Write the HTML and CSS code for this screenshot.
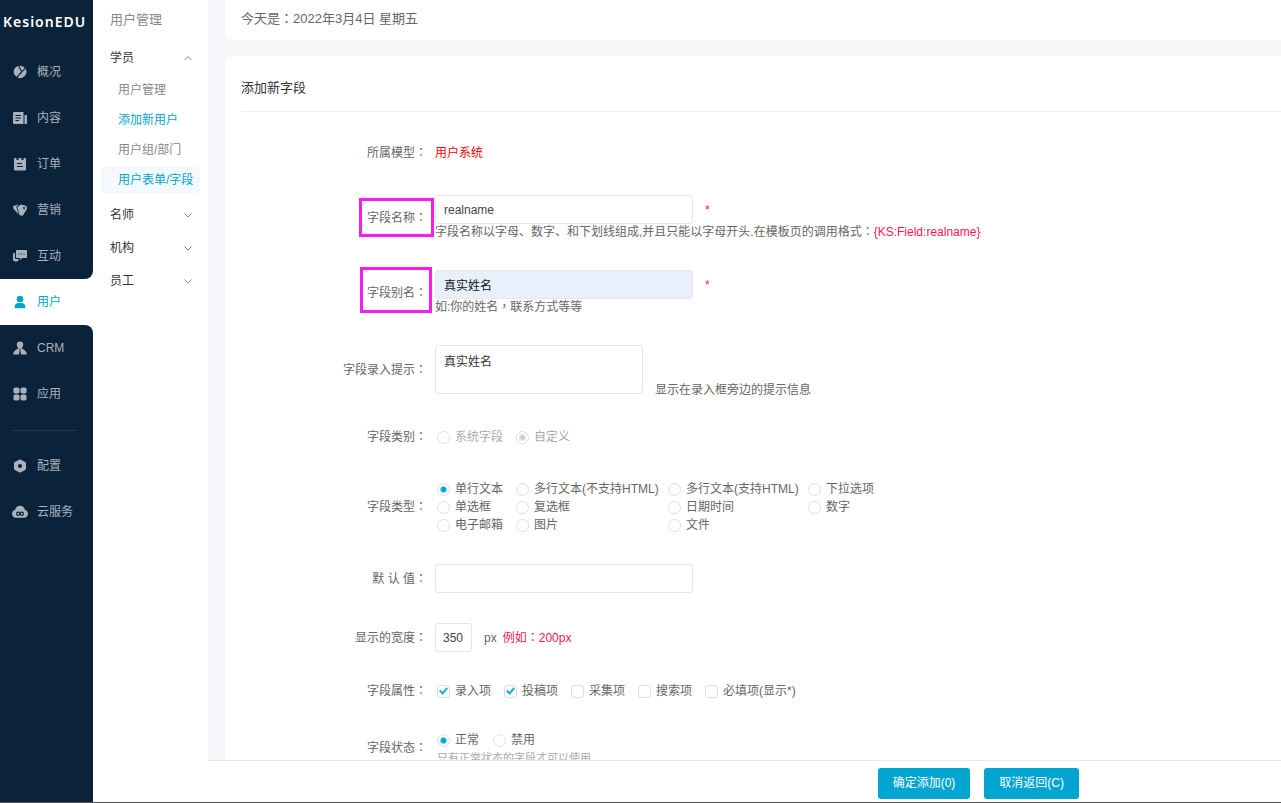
FILE: index.html
```html
<!DOCTYPE html>
<html lang="zh-CN">
<head>
  <meta charset="UTF-8" />
  <title>添加新字段</title>
  <link rel="stylesheet" href="styles.css">
</head>
<body>
  <nav class="sidebar">
    <div class="nav-block nav-top">
      <div class="logo">KesionEDU</div>
      <a class="nav-item" href="#">
        <svg viewBox="0 0 14 14"><path d="M5.200 1 8 6.800 3.600 11.800A5.900 5.900 0 0 1 5.200 1z"/><path d="M6.400.8A6.300 6.300 0 0 1 11.800 3L8.800 6z"/><path d="M12.600 3.800A6.300 6.300 0 0 1 4.600 12.600L9 7.400z"/></svg>
        概况
      </a>
      <a class="nav-item" href="#">
        <svg viewBox="0 0 14 14"><path fill-rule="evenodd" d="M1 1h9.500v12H1a1 1 0 0 1-1-1V2a1 1 0 0 1 1-1zm1.500 3v1h5.500V4zm0 2.500v1h5.500v-1zm0 2.500v1H6V9z"/><path d="M11.500 4H13a1 1 0 0 1 1 1v7a1 1 0 0 1-1 1h-1.500z"/></svg>
        内容
      </a>
      <a class="nav-item" href="#">
        <svg viewBox="0 0 14 14"><path fill-rule="evenodd" d="M2 1h1.500v2h2V1h3v2h2V1H12a1 1 0 0 1 1 1v10.500a1 1 0 0 1-1 1H2a1 1 0 0 1-1-1V2a1 1 0 0 1 1-1zm2 5v1h5V6zm0 3v1h6V9z"/></svg>
        订单
      </a>
      <a class="nav-item" href="#">
        <svg viewBox="0 0 14 14"><path fill-rule="evenodd" d="M4.200 4 8 1.500l5.500 1.500.5 3-4.500 7L6.500 12zM11 4a1 1 0 1 0 .1 0z"/><path d="M6 1.200 3.300 3.600l2.200 8L.3 5.500 0 3z"/></svg>
        营销
      </a>
      <a class="nav-item" href="#">
        <svg viewBox="0 0 14 14"><path fill-rule="evenodd" d="M4 1h9a1 1 0 0 1 1 1v6a1 1 0 0 1-1 1H9l-2 2V9H4a1 1 0 0 1-1-1V2a1 1 0 0 1 1-1zm1.500 3.500v1h1v-1zm2.500 0v1h1v-1zm2.500 0v1h1v-1z"/><path d="M2 4v5a1 1 0 0 0 1 1h2.500v2H4l-1.500 1.500V12H1a1 1 0 0 1-1-1V5a1 1 0 0 1 1-1z"/></svg>
        互动
      </a>
    </div>
    <a class="nav-item active" href="#">
      <svg viewBox="0 0 14 14"><circle cx="7" cy="4" r="3.300"/><path d="M5 8h4c2.500.5 3.500 2 3.500 4.500q0 .7-1 .7h-9q-1 0-1-.7C1.500 10 2.500 8.500 5 8z"/></svg>
      用户
    </a>
    <div class="nav-block nav-bottom">
      <a class="nav-item" href="#">
        <svg viewBox="0 0 14 14"><path d="M7 .5a3.200 3.200 0 0 1 3.200 3.300c0 1.400-.7 2.400-1.400 3.200L7.500 8h-1L5.200 7c-.7-.8-1.400-1.800-1.400-3.200A3.200 3.200 0 0 1 7 .5z"/><path d="M5.600 7 6.700 9 6 13.500H1q-1 0-.8-1C.8 10 3 8.500 5.600 7zM8.400 7c2.600 1.500 4.800 3 5.400 5.500q.2 1-.8 1H8L7.300 9z"/></svg>
        CRM
      </a>
      <a class="nav-item" href="#">
        <svg viewBox="0 0 14 14"><rect x=".5" y=".5" width="6" height="6" rx="1.800"/><rect x="7.500" y=".5" width="6" height="6" rx="1.800"/><rect x=".5" y="7.500" width="6" height="6" rx="1.800"/><rect x="7.500" y="7.500" width="6" height="6" rx="1.800"/></svg>
        应用
      </a>
      <hr class="nav-line">
      <a class="nav-item" href="#">
        <svg viewBox="0 0 14 14"><path fill-rule="evenodd" d="M7 .4q.6 0 1 .3l4.200 2.300q.8.500.8 1.400v5.200q0 .9-.8 1.400L8 13.300q-1 .6-2 0L1.800 11Q1 10.500 1 9.600V4.400q0-.9.8-1.400L6 .7q.4-.3 1-.3zM7 5a2 2 0 1 0 .1 0z"/></svg>
        配置
      </a>
      <a class="nav-item" href="#">
        <svg class="wide" viewBox="0 0 14 14"><path fill-rule="evenodd" d="M7 1.500c2.300 0 4 1.500 4.300 3.700 1.700.4 2.700 1.700 2.700 3.300 0 2-1.500 3.500-3.500 3.500h-7C1.500 12 0 10.500 0 8.500c0-1.600 1-2.900 2.700-3.300C3 3 4.700 1.500 7 1.500zM5.400 6.600a1.900 1.900 0 1 0 0 3.800c.7 0 1.200-.3 1.600-.7.4.4.9.7 1.600.7a1.900 1.900 0 1 0 0-3.800c-.7 0-1.200.3-1.600.7-.4-.4-.9-.7-1.600-.7zM5.400 7.600a.9.9 0 1 1 0 1.800.9.9 0 0 1 0-1.800zM8.600 7.600a.9.9 0 1 1 0 1.800.9.9 0 0 1 0-1.800z"/></svg>
        云服务
      </a>
    </div>
  </nav>

  <aside class="submenu">
    <div class="submenu-title">用户管理</div>
    <a class="group" href="#">学员 <svg viewBox="0 0 8 8"><path d="M0.500 6 4 2.500 7.500 6"/></svg></a>
    <ul>
      <li><a href="#">用户管理</a></li>
      <li><a class="blue" href="#">添加新用户</a></li>
      <li><a href="#">用户组/部门</a></li>
      <li><a class="blue current" href="#">用户表单/字段</a></li>
    </ul>
    <a class="group" href="#">名师 <svg viewBox="0 0 8 8"><path d="M0.500 2.500 4 6 7.500 2.500"/></svg></a>
    <a class="group" href="#">机构 <svg class="brown" viewBox="0 0 8 8"><path d="M0.500 2.500 4 6 7.500 2.500"/></svg></a>
    <a class="group" href="#">员工 <svg viewBox="0 0 8 8"><path d="M0.500 2.500 4 6 7.500 2.500"/></svg></a>
  </aside>

  <div class="main">
    <div class="content">
      <div class="card today">今天是<span class="mid" lang="zh-TW">：</span>2022年3月4日 星期五</div>

      <form class="card" id="fieldForm">
        <h2>添加新字段</h2>

        <div class="row">
          <div class="label">所属模型<span class="mid" lang="zh-TW">：</span></div>
          <div class="field red one-line">用户系统</div>
        </div>

        <div class="row">
          <label class="label mark" for="fieldName">字段名称<span class="mid" lang="zh-TW">：</span></label>
          <div class="field">
            <div class="line"><input class="text" type="text" id="fieldName" value="realname"><span class="star">*</span></div>
            <div class="hint">字段名称以字母、数字、和下划线组成,并且只能以字母开头.在模板页的调用格式<span class="mid" lang="zh-TW">：</span><span class="pink">{KS:Field:realname}</span></div>
          </div>
        </div>

        <div class="row">
          <label class="label mark mark-tall" for="fieldAlias">字段别名<span class="mid" lang="zh-TW">：</span></label>
          <div class="field">
            <div class="line"><input class="text filled" type="text" id="fieldAlias" value="真实姓名"><span class="star">*</span></div>
            <div class="hint">如:你的姓名<span class="mid" lang="zh-TW">，</span>联系方式等等</div>
          </div>
        </div>

        <div class="row">
          <label class="label" for="fieldTips">字段录入提示<span class="mid" lang="zh-TW">：</span></label>
          <div class="field line line-end">
            <textarea id="fieldTips">真实姓名</textarea>
            <span class="tips">显示在录入框旁边的提示信息</span>
          </div>
        </div>

        <div class="row">
          <div class="label">字段类别<span class="mid" lang="zh-TW">：</span></div>
          <div class="field options tall">
            <label class="disabled"><input type="radio" name="kind" disabled>系统字段</label>
            <label class="disabled"><input type="radio" name="kind" checked disabled>自定义</label>
          </div>
        </div>

        <div class="row">
          <div class="label">字段类型<span class="mid" lang="zh-TW">：</span></div>
          <div class="field types">
            <label><input type="radio" name="type" checked>单行文本</label>
            <label><input type="radio" name="type">多行文本(不支持HTML)</label>
            <label><input type="radio" name="type">多行文本(支持HTML)</label>
            <label><input type="radio" name="type">下拉选项</label>
            <label><input type="radio" name="type">单选框</label>
            <label><input type="radio" name="type">复选框</label>
            <label><input type="radio" name="type">日期时间</label>
            <label><input type="radio" name="type">数字</label>
            <label><input type="radio" name="type">电子邮箱</label>
            <label><input type="radio" name="type">图片</label>
            <label><input type="radio" name="type">文件</label>
          </div>
        </div>

        <div class="row">
          <label class="label" for="defaultValue">默 认 值<span class="mid" lang="zh-TW">：</span></label>
          <div class="field line"><input class="text" type="text" id="defaultValue"></div>
        </div>

        <div class="row">
          <label class="label" for="showWidth">显示的宽度<span class="mid" lang="zh-TW">：</span></label>
          <div class="field line">
            <input class="text short" type="text" id="showWidth" value="350">
            <span class="unit">px</span>
            <span class="pink">例如<span class="mid" lang="zh-TW">：</span>200px</span>
          </div>
        </div>

        <div class="row">
          <div class="label">字段属性<span class="mid" lang="zh-TW">：</span></div>
          <div class="field options">
            <label><input type="checkbox" checked>录入项</label>
            <label><input type="checkbox" checked>投稿项</label>
            <label><input type="checkbox">采集项</label>
            <label><input type="checkbox">搜索项</label>
            <label><input type="checkbox">必填项(显示*)</label>
          </div>
        </div>

        <div class="row">
          <div class="label">字段状态<span class="mid" lang="zh-TW">：</span></div>
          <div class="field">
            <div class="options status">
              <label><input type="radio" name="status" checked>正常</label>
              <label><input type="radio" name="status">禁用</label>
            </div>
            <div class="note">只有正常状态的字段才可以使用</div>
          </div>
        </div>
      </form>
    </div>

    <div class="footer">
      <button type="submit" form="fieldForm">确定添加(0)</button>
      <button type="button">取消返回(C)</button>
    </div>
  </div>
</body>
</html>
```

FILE: styles.css
```css
*, *::before, *::after {
  box-sizing: border-box;
}

body {
  margin: 0;
  height: 100vh;
  display: flex;
  overflow: hidden;
  border-bottom: 1px solid #555;
  background: #f4f6fa;
  color: #666;
  font-family: "Liberation Sans", "Noto Sans CJK SC", sans-serif;
  font-size: 12px;
  line-height: 16px;
}

a {
  color: inherit;
  text-decoration: none;
}

input, textarea, button {
  font: inherit;
  margin: 0;
}

/* full-width marks centred in their cell */
.mid {
  font-family: "Noto Sans CJK TC", sans-serif;
  line-height: 1;
}

/* left navigation */
.sidebar {
  width: 93px;
  flex: none;
  display: flex;
  flex-direction: column;
  background: #fff;
}

.nav-block {
  background: #0b233a;
}

.nav-top {
  border-bottom-right-radius: 8px;
}

.nav-bottom {
  flex: 1;
  border-top-right-radius: 8px;
}

.logo {
  height: 49px;
  padding: 0 0 5px 3px;
  display: flex;
  align-items: center;
  color: #fff;
  font-family: "Noto Sans", sans-serif;
  font-size: 14px;
  font-weight: 600;
  letter-spacing: 1px;
}

.nav-item {
  height: 46px;
  padding-left: 13px;
  display: flex;
  align-items: center;
  gap: 10px;
  color: #a9b1ba;
}

.nav-item svg {
  width: 14px;
  height: 14px;
  fill: currentColor;
}

.nav-item svg.wide {
  width: 16px;
  height: 16px;
  margin: 0 -1px;
}

.nav-item.active {
  color: #02a5cf;
}

.nav-line {
  margin: 13px 16px 12px 12px;
  border: none;
  border-top: 1px solid #23394e;
}

/* second level menu */
.submenu {
  width: 115px;
  flex: none;
  background: #fff;
}

.submenu-title {
  height: 41px;
  padding-left: 17px;
  line-height: 40px;
  font-size: 13px;
  color: #888;
}

.group {
  height: 33px;
  padding: 0 16px 0 17px;
  display: flex;
  align-items: center;
  justify-content: space-between;
  color: #333;
}

.group svg {
  width: 8px;
  height: 8px;
  fill: none;
  stroke: #888;
}

.group svg.brown {
  stroke: #a5704f;
}

.submenu ul {
  list-style: none;
  margin: 1px 0 3px;
  padding: 0;
}

.submenu li {
  padding: 2px 8px;
}

.submenu li a {
  display: block;
  padding-left: 17px;
  line-height: 26px;
  border-radius: 4px;
  color: #888;
  white-space: nowrap;
}

.submenu li a.blue {
  color: #02a5cf;
}

.submenu li a.current {
  background: #f3f9fd;
}

/* page */
.main {
  flex: 1;
  min-width: 0;
  display: flex;
  flex-direction: column;
}

.content {
  flex: 1;
  min-height: 0;
  overflow: hidden;
  padding-left: 17px;
}

.card {
  padding: 0 0 20px 16px;
  background: #fff;
  border-radius: 8px 0 0 8px;
}

.today {
  height: 40px;
  padding-bottom: 0;
  margin-bottom: 16px;
  border-top-left-radius: 0;
  line-height: 38px;
  font-size: 13px;
}

h2 {
  margin: 0 0 14px;
  height: 56px;
  padding-top: 8px;
  border-bottom: 1px solid #eee;
  line-height: 48px;
  font-size: 13px;
  font-weight: normal;
  color: #333;
}

.row {
  display: flex;
  align-items: center;
  gap: 8px;
  padding: 15px 0;
}

.label {
  position: relative;
  width: 186px;
  flex: none;
  text-align: right;
}

.mark::after {
  content: "";
  position: absolute;
  top: -12px;
  right: -7px;
  width: 75px;
  height: 39px;
  border: 3px solid #f81cf0;
}

.mark-tall::after {
  top: -18px;
  right: -5px;
  width: 72px;
  height: 46px;
}

.field {
  min-width: 0;
}

.one-line {
  line-height: 24px;
}

.line {
  display: flex;
  align-items: center;
}

.line-end {
  align-items: flex-end;
}

.text {
  width: 258px;
  height: 29px;
  padding: 0 8px;
  border: 1px solid #e6e6e6;
  border-radius: 3px;
  background: #fff;
  color: #444;
}

.text.short {
  width: 37px;
  padding: 0 7px;
}

.text.filled {
  background: #e8f0fe;
  color: #111;
}

textarea {
  display: block;
  width: 208px;
  height: 49px;
  padding: 8px;
  border: 1px solid #e6e6e6;
  border-radius: 3px;
  color: #333;
  resize: none;
  overflow: hidden;
}

.star {
  margin-left: 12px;
  color: #ff1458;
}

.tips {
  margin: 0 0 -4px 12px;
}

.unit {
  margin: 0 6px 0 12px;
}

.red {
  color: #f00;
}

.pink {
  color: #ff1458;
}

.options {
  display: flex;
  gap: 13px;
  padding-left: 2px;
  line-height: 18px;
}

.tall {
  line-height: 26px;
}

.status {
  gap: 14px;
  line-height: 20px;
}

.types {
  display: grid;
  grid-template-columns: 79px 152px 140px auto;
  padding-left: 2px;
  line-height: 18px;
}

.options label, .types label {
  display: flex;
  align-items: center;
  gap: 5px;
  white-space: nowrap;
}

.disabled {
  color: #aaa;
}

input[type="radio"], input[type="checkbox"] {
  appearance: none;
  width: 13px;
  height: 13px;
  border: 1px solid #dcdfe2;
  border-radius: 50%;
  background: #fff;
}

input[type="radio"]:checked {
  background: radial-gradient(circle, #02a5cf 2px, #fff 4px);
}

input[type="radio"]:disabled:checked {
  background: radial-gradient(circle, #ccd1d5 2px, #fff 4px);
}

input[type="checkbox"] {
  display: grid;
  place-items: center;
  border-radius: 3px;
}

input[type="checkbox"]:checked::before {
  content: "";
  width: 5px;
  height: 8px;
  margin-bottom: 2px;
  border: solid #1cb0d8;
  border-width: 0 2px 2px 0;
  transform: rotate(42deg);
}

.note {
  padding-left: 2px;
  color: #aaa;
  font-size: 11px;
}

.footer {
  height: 42px;
  flex: none;
  display: flex;
  align-items: center;
  justify-content: flex-end;
  gap: 14px;
  padding: 3px 202px 0 0;
  border-top: 1px solid #e8ebee;
  background: #fff;
}

button {
  height: 31px;
  padding: 0 15px;
  border: none;
  border-radius: 3px;
  background: #02a5cf;
  color: #fff;
  cursor: pointer;
}
```
